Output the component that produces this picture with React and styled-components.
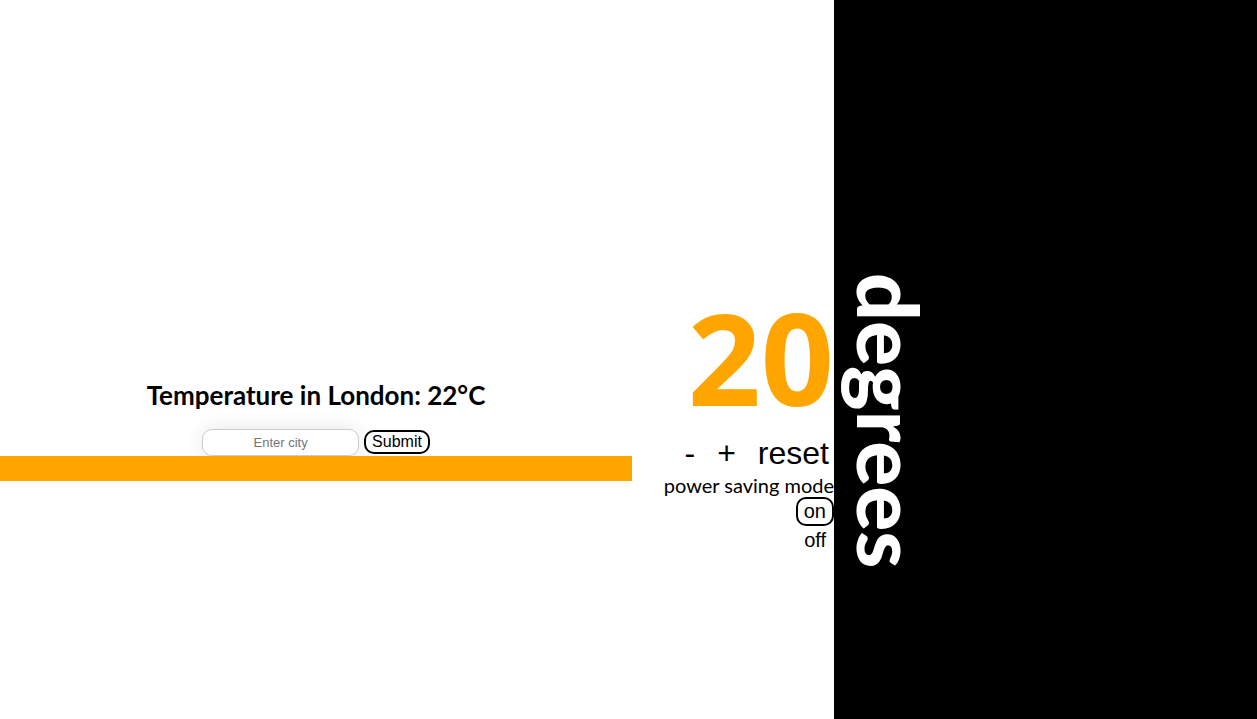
import React, { useState } from "react";
import styled, { createGlobalStyle } from "styled-components";

const GlobalStyle = createGlobalStyle`
  * { box-sizing: border-box; }
  body {
    margin: 0;
    background: #fff;
    color: #000;
    font-family: "Trebuchet MS", Lato, sans-serif;
  }
`;

const Page = styled.main`
  display: grid;
  grid-template-columns: 632fr 202px 423fr;
  min-height: 100vh;
`;

const Column = styled.section`
  display: flex;
  flex-direction: column;
  justify-content: center;
  padding-top: 122px;
`;

const Controls = styled(Column)`
  align-items: flex-end;
  padding-bottom: 6px;
`;

const Unit = styled(Column)`
  padding-left: 8px;
  background: #000;
  color: #fff;
`;

const Heading = styled.h2`
  margin: 20px 0;
  font-size: 26px;
  line-height: 28px;
  text-align: center;
`;

const CityForm = styled.form`
  display: flex;
  justify-content: center;
  align-items: center;
  gap: 5px;
`;

const CityInput = styled.input`
  width: 157px;
  height: 27px;
  padding: 5px;
  border: 1px solid #ccc;
  border-radius: 10px;
  box-shadow: 0 0 20px rgba(0, 0, 0, 0.1);
  background: #fff;
  font: 13px "Liberation Sans", Arial, sans-serif;
  text-align: center;
  &::placeholder { color: #757575; }
`;

const Button = styled.button`
  padding: 0 6px;
  border: 2px solid ${(p) => (p.$outlined ? "#000" : "transparent")};
  border-radius: 10px;
  background: transparent;
  color: #000;
  font: ${(p) => p.$size}px/${(p) => p.$line}px "Liberation Sans", Arial, sans-serif;
`;

const StepButton = styled(Button).attrs({ $size: 32, $line: 36 })`
  padding: 0 3px;
`;

const Bar = styled.div`
  position: relative;
  height: 25px;
  background: orange;
`;

const Temperature = styled.output`
  color: orange;
  font-family: "Trebuchet MS", "Open Sans", sans-serif;
  font-size: 128px;
  font-weight: 700;
  line-height: 152px;
`;

const ButtonRow = styled.div`
  display: flex;
  gap: 12px;
`;

const ModeLabel = styled.p`
  margin: 0;
  font-size: 20px;
  line-height: 24px;
  white-space: nowrap;
`;

const UnitText = styled.h1`
  margin: 0;
  font-size: 84px;
  font-weight: 900;
  line-height: 94px;
  writing-mode: vertical-rl;
  align-self: flex-start;
`;

export default function App() {
  const [target, setTarget] = useState(20);
  const [saving, setSaving] = useState(true);
  return (
    <>
      <GlobalStyle />
      <Page>
        <Column>
          <Heading>Temperature in London: 22°C</Heading>
          <CityForm onSubmit={(e) => e.preventDefault()}>
            <CityInput type="text" aria-label="City" placeholder="Enter city" />
            <Button $outlined $size={16} $line={20} type="submit">Submit</Button>
          </CityForm>
          <Bar />
        </Column>
        <Controls>
          <Temperature>{target}</Temperature>
          <ButtonRow>
            <StepButton aria-label="Decrease" onClick={() => setTarget(target - 1)}>-</StepButton>
            <StepButton aria-label="Increase" onClick={() => setTarget(target + 1)}>+</StepButton>
            <StepButton onClick={() => setTarget(20)}>reset</StepButton>
          </ButtonRow>
          <ModeLabel>power saving mode</ModeLabel>
          <Button $outlined={saving} $size={20} $line={25} onClick={() => setSaving(true)}>on</Button>
          <Button $outlined={!saving} $size={20} $line={25} onClick={() => setSaving(false)}>off</Button>
        </Controls>
        <Unit>
          <UnitText>degrees</UnitText>
        </Unit>
      </Page>
    </>
  );
}
